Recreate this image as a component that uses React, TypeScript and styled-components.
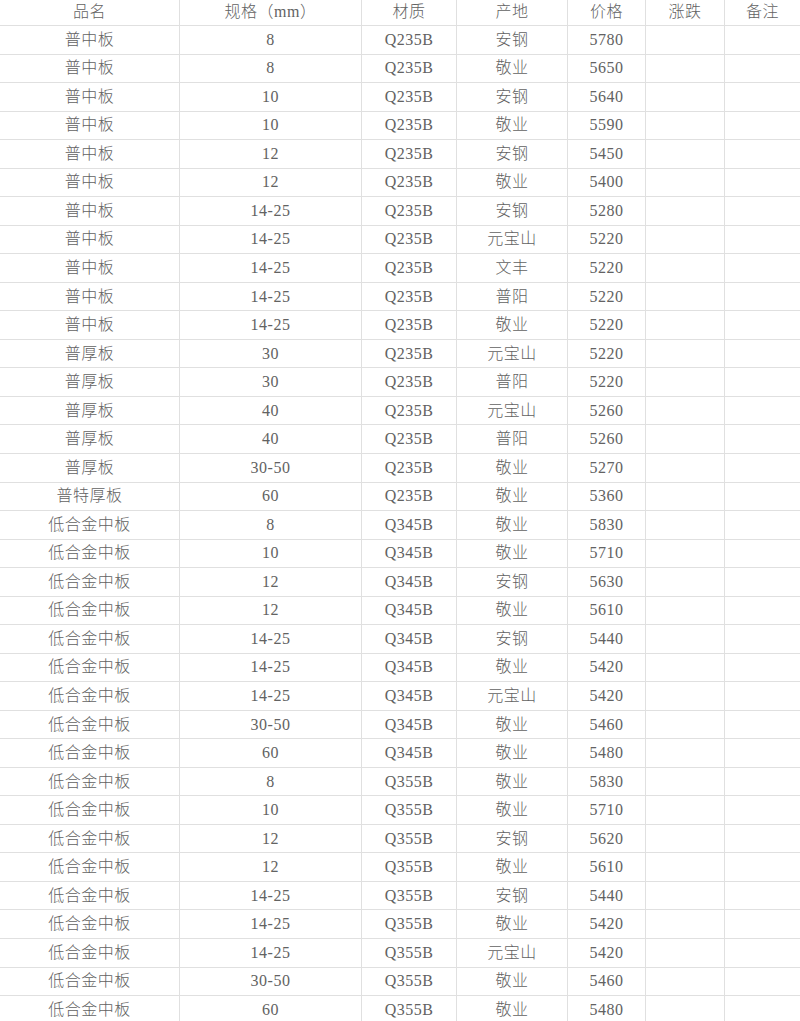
import styled, { createGlobalStyle } from 'styled-components';

const GlobalStyle = createGlobalStyle`
  html, body {
    margin: 0;
    padding: 0;
    background: #ffffff;
  }
  body {
    font-family: 'Liberation Serif', 'Noto Sans CJK SC', serif;
    color: #626262;
  }
`;

type PriceRow = [string, string, string, string, string];

const rows: PriceRow[] = [
  ['普中板', '8', 'Q235B', '安钢', '5780'],
  ['普中板', '8', 'Q235B', '敬业', '5650'],
  ['普中板', '10', 'Q235B', '安钢', '5640'],
  ['普中板', '10', 'Q235B', '敬业', '5590'],
  ['普中板', '12', 'Q235B', '安钢', '5450'],
  ['普中板', '12', 'Q235B', '敬业', '5400'],
  ['普中板', '14-25', 'Q235B', '安钢', '5280'],
  ['普中板', '14-25', 'Q235B', '元宝山', '5220'],
  ['普中板', '14-25', 'Q235B', '文丰', '5220'],
  ['普中板', '14-25', 'Q235B', '普阳', '5220'],
  ['普中板', '14-25', 'Q235B', '敬业', '5220'],
  ['普厚板', '30', 'Q235B', '元宝山', '5220'],
  ['普厚板', '30', 'Q235B', '普阳', '5220'],
  ['普厚板', '40', 'Q235B', '元宝山', '5260'],
  ['普厚板', '40', 'Q235B', '普阳', '5260'],
  ['普厚板', '30-50', 'Q235B', '敬业', '5270'],
  ['普特厚板', '60', 'Q235B', '敬业', '5360'],
  ['低合金中板', '8', 'Q345B', '敬业', '5830'],
  ['低合金中板', '10', 'Q345B', '敬业', '5710'],
  ['低合金中板', '12', 'Q345B', '安钢', '5630'],
  ['低合金中板', '12', 'Q345B', '敬业', '5610'],
  ['低合金中板', '14-25', 'Q345B', '安钢', '5440'],
  ['低合金中板', '14-25', 'Q345B', '敬业', '5420'],
  ['低合金中板', '14-25', 'Q345B', '元宝山', '5420'],
  ['低合金中板', '30-50', 'Q345B', '敬业', '5460'],
  ['低合金中板', '60', 'Q345B', '敬业', '5480'],
  ['低合金中板', '8', 'Q355B', '敬业', '5830'],
  ['低合金中板', '10', 'Q355B', '敬业', '5710'],
  ['低合金中板', '12', 'Q355B', '安钢', '5620'],
  ['低合金中板', '12', 'Q355B', '敬业', '5610'],
  ['低合金中板', '14-25', 'Q355B', '安钢', '5440'],
  ['低合金中板', '14-25', 'Q355B', '敬业', '5420'],
  ['低合金中板', '14-25', 'Q355B', '元宝山', '5420'],
  ['低合金中板', '30-50', 'Q355B', '敬业', '5460'],
  ['低合金中板', '60', 'Q355B', '敬业', '5480'],
];

const headers = ['品名', '规格（mm）', '材质', '产地', '价格', '涨跌', '备注'];

export default function App() {
  return (
    <>
      <GlobalStyle />
      <Sheet>
        <Row $height={26}>
          {headers.map((h) => (
            <HeadCell key={h}>{h}</HeadCell>
          ))}
        </Row>
        {rows.map((r, i) => (
          <Row key={i} $height={28.54}>
            {r.map((v, j) => (
              <Cell key={j}>{v}</Cell>
            ))}
            <Cell />
            <Cell />
          </Row>
        ))}
      </Sheet>
    </>
  );
}

const Sheet = styled.div`
  width: 800px;
  display: flex;
  flex-direction: column;
`;

const Row = styled.div<{ $height: number }>`
  display: grid;
  grid-template-columns: 180px 182px 95px 111px 78px 79px 75px;
  height: ${(p) => p.$height}px;
  box-sizing: border-box;
  border-bottom: 1px solid #e0e0e0;
  flex-shrink: 0;
`;

const Cell = styled.div`
  display: flex;
  align-items: center;
  justify-content: center;
  font-size: 16px;
  font-weight: 300;
  line-height: 1;
  letter-spacing: 0.5px;
  border-right: 1px solid #e0e0e0;
  white-space: nowrap;

  &:last-child {
    border-right: none;
  }
`;

const HeadCell = styled(Cell)`
  padding-bottom: 2px;
`;
